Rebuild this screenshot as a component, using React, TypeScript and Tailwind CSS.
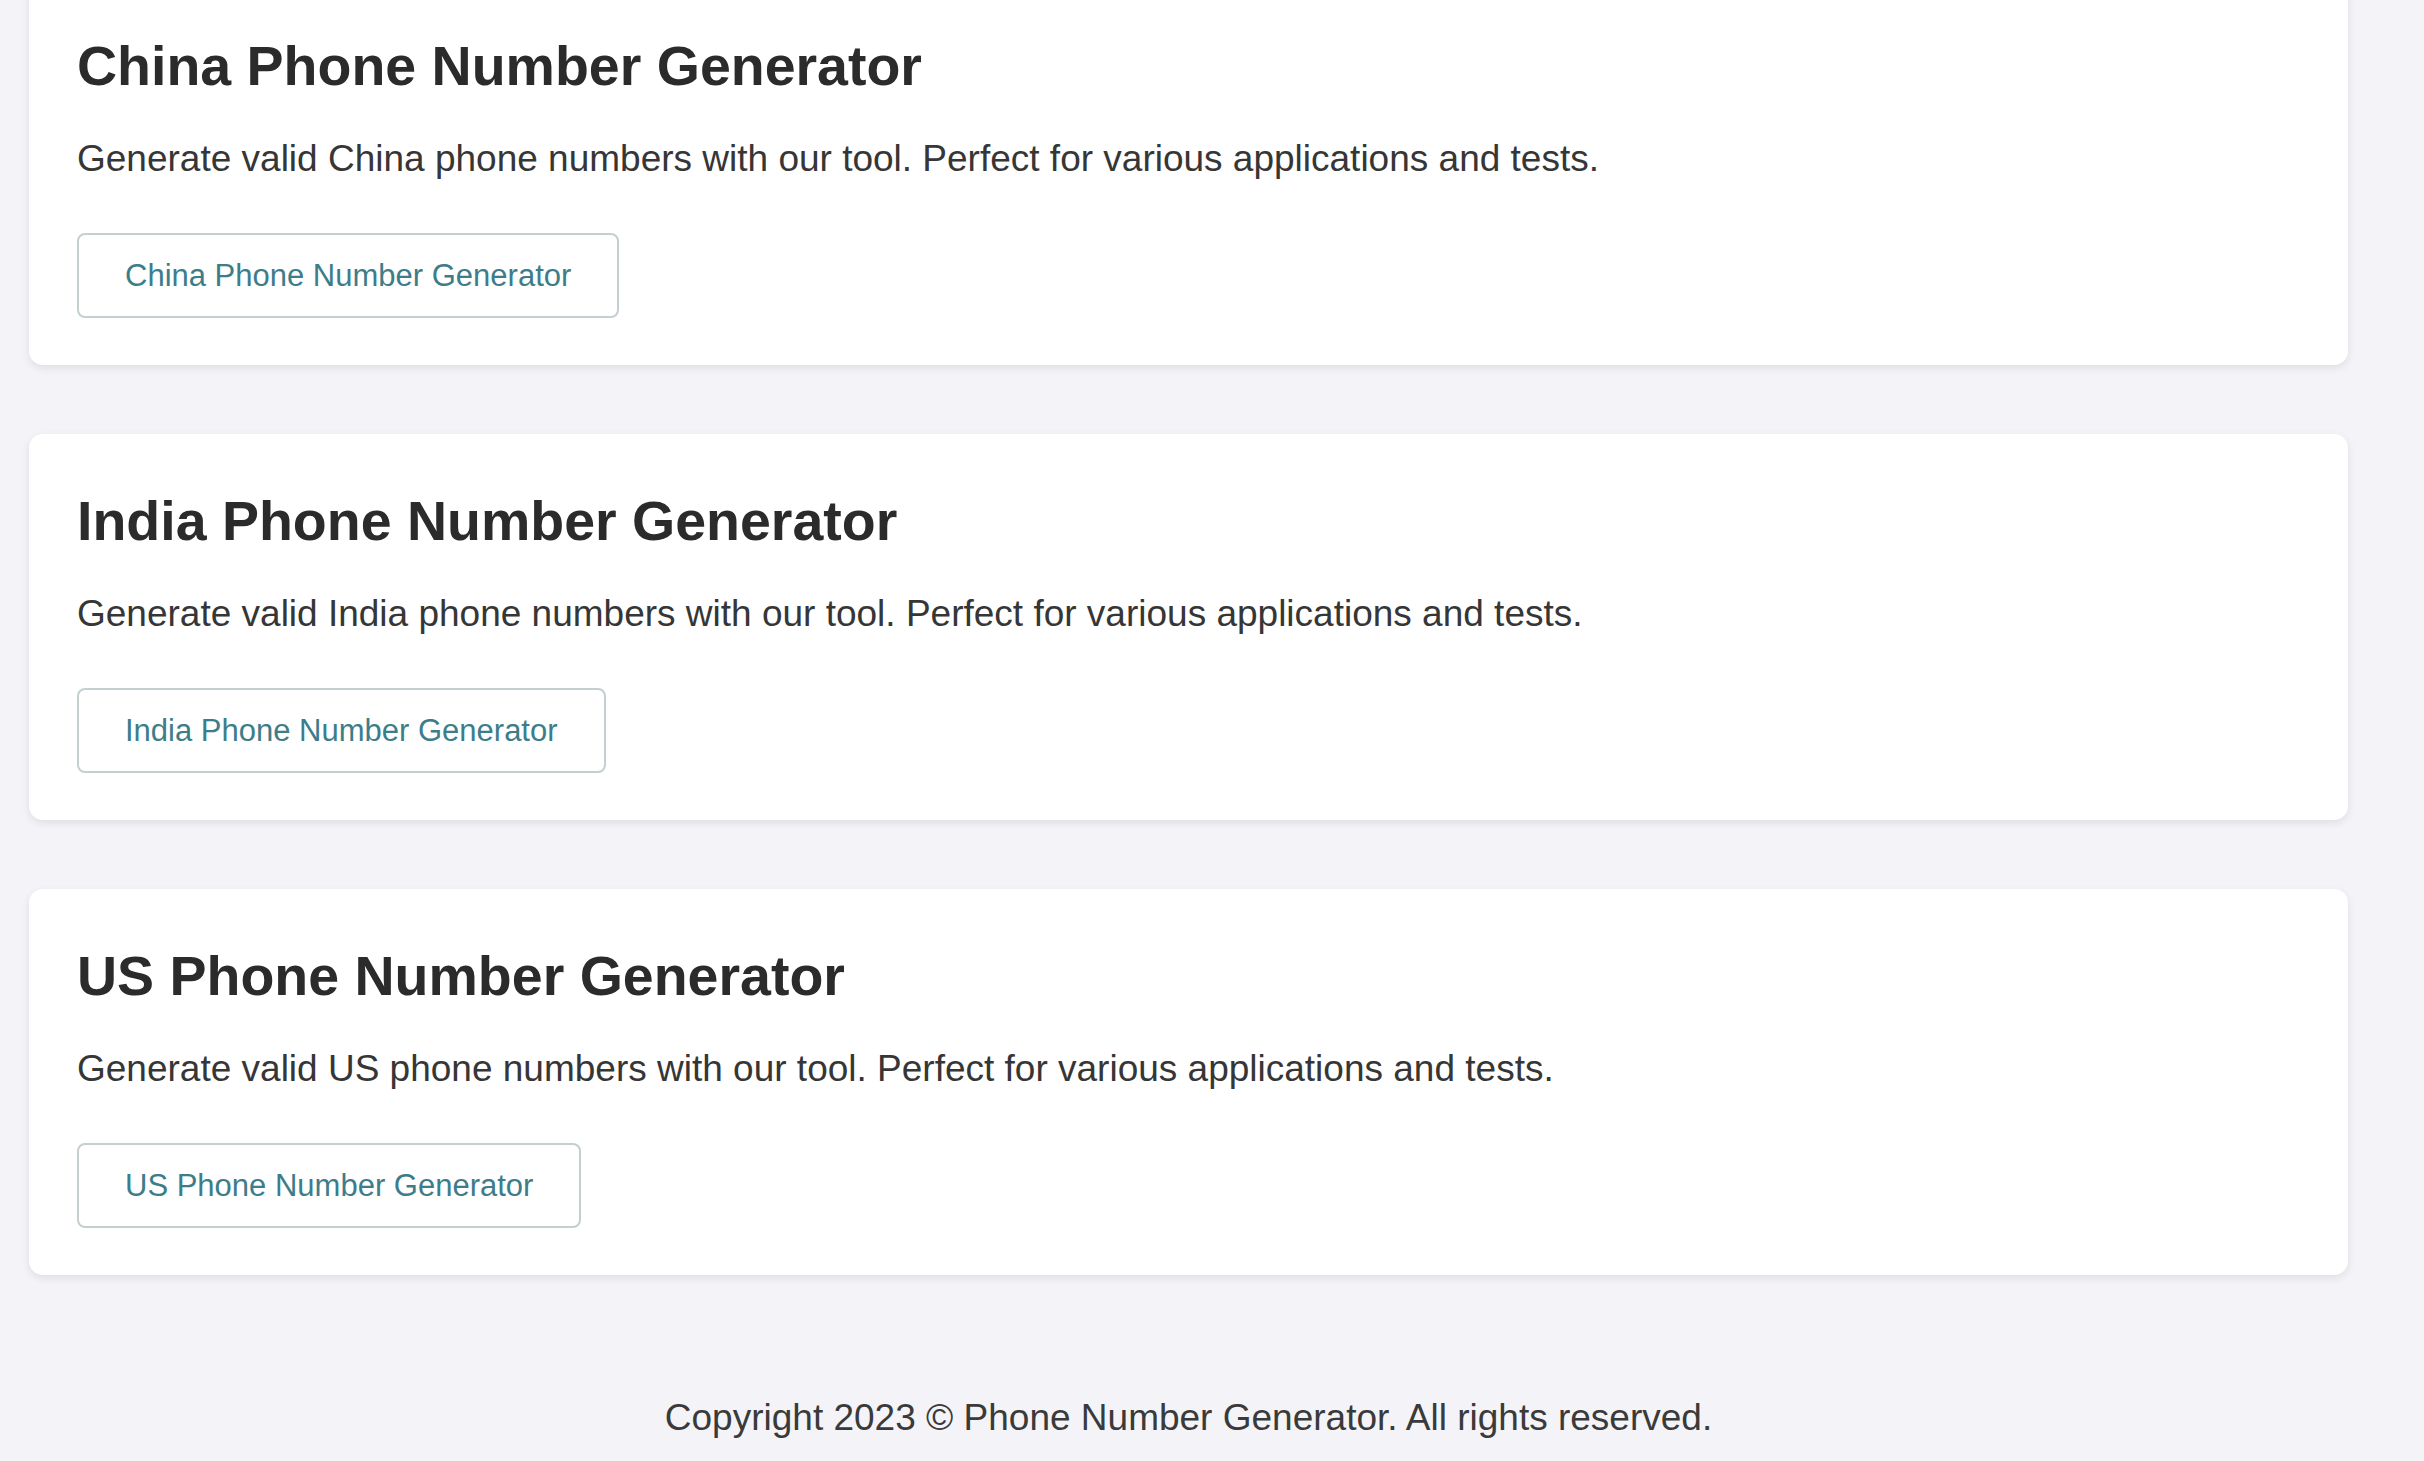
const tools = [
  { name: "China" },
  { name: "India" },
  { name: "US" },
];

function GeneratorCard({ name }: { name: string }) {
  return (
    <div className="bg-white rounded-[14px] shadow-[0_3px_8px_rgba(0,0,0,0.09)] px-[48px] pt-[55px] pb-[47px]">
      <h2 className="text-[55.5px] leading-[64px] font-bold text-[#2b2b2b]">
        {name} Phone Number Generator
      </h2>
      <p className="mt-[39px] text-[37px] leading-[44px] text-[#363636]">
        Generate valid {name} phone numbers with our tool. Perfect for various applications and tests.
      </p>
      <button className="mt-[52px] h-[85px] px-[46px] border-2 border-[#c3cfd1] rounded-[8px] bg-white text-[31px] leading-[37px] text-[#3d7d89] cursor-pointer">
        {name} Phone Number Generator
      </button>
    </div>
  );
}

export default function App() {
  return (
    <div
      className="w-full h-[1461px] overflow-hidden bg-[#f4f4f8]"
      style={{ fontFamily: '"Liberation Sans", Arial, sans-serif' }}
    >
      <div className="ml-[29px] w-[2319px] -mt-[21px] flex flex-col gap-[69px]">
        {tools.map((t) => (
          <GeneratorCard key={t.name} name={t.name} />
        ))}
      </div>
      <footer className="ml-[29px] w-[2319px] mt-[121px] text-center text-[37px] leading-[44px] text-[#3a3a3a]">
        Copyright 2023 © Phone Number Generator. All rights reserved.
      </footer>
    </div>
  );
}
